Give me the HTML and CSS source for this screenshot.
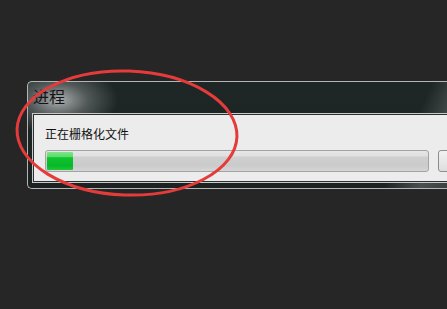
FILE: index.html
```html
<!DOCTYPE html>
<html lang="zh">
<head>
<meta charset="utf-8">
<link rel="stylesheet" href="styles.css">
</head>
<body>
<div class="desktop">
  <div class="window">
    <div class="title">进程</div>
    <div class="client-outer">
      <div class="client">
        <div class="label">正在栅格化文件</div>
        <div class="row">
          <div class="progress"><div class="fill" style="width:26px"></div></div>
          <div class="button"></div>
        </div>
      </div>
    </div>
  </div>
  <svg class="mark" width="447" height="309" viewBox="0 0 447 309">
    <ellipse cx="127" cy="133" rx="110" ry="62" transform="rotate(2 127 133)" fill="none" stroke="#e43b3b" stroke-width="3"/>
  </svg>
</div>
</body>
</html>
```
FILE: styles.css
```css
html, body {
  margin: 0;
  padding: 0;
  background: #262626;
  overflow: hidden;
}
.desktop {
  position: relative;
  width: 447px;
  height: 309px;
  overflow: hidden;
  padding: 81px 0 0 27px;
  box-sizing: border-box;
}
.window {
  width: 470px;
  height: 108px;
  box-sizing: border-box;
  border: 1px solid #b4b6b6;
  border-right: none;
  border-radius: 5px 0 0 5px;
  background:
    radial-gradient(ellipse 60px 34px at 30px 18px, rgba(185,190,190,0.9), rgba(130,136,136,0.5) 50%, rgba(30,36,36,0) 100%),
    linear-gradient(115deg, rgba(0,0,0,0) 0%, rgba(0,0,0,0) 78%, rgba(110,116,116,0.55) 85%, rgba(80,86,86,0.5) 92%, rgba(110,116,116,0.6) 100%),
    linear-gradient(#1f2626, #1c2222);
  display: flex;
  flex-direction: column;
  padding-bottom: 5px;
  font-family: "Noto Sans CJK SC", "Noto Sans", sans-serif;
}
.title {
  height: 31px;
  box-sizing: border-box;
  padding: 4px 0 0 5px;
  font-size: 16px;
  line-height: 20px;
  color: #151515;
}
.client-outer {
  margin-left: 4px;
  border: 1px solid #c9cbcb;
  border-right: none;
}
.client {
  border: 1px solid #2c2f2f;
  border-right: none;
  background: #ececec;
  padding: 12px 0 0 11px;
  box-sizing: border-box;
  height: 68px;
}
.label {
  font-size: 12px;
  line-height: 14px;
  color: #111;
  height: 14px;
}
.row {
  display: flex;
  gap: 9px;
  margin-top: 9px;
}
.progress {
  flex: 0 0 384px;
  height: 22px;
  box-sizing: border-box;
  border: 1px solid #a2a4a4;
  border-radius: 3px;
  background: linear-gradient(#e6e6e6 0%, #e0e0e0 25%, #cfcfcf 30%, #cbcbcb 75%, #d6d6d6 100%);
  overflow: hidden;
  padding: 1px;
}
.fill {
  height: 100%;
  border-radius: 1px;
  background: linear-gradient(#7fe48c 0%, #5cdc6c 25%, #10c530 32%, #06b827 75%, #20c63c 100%);
}
.button {
  flex: 0 0 40px;
  height: 22px;
  box-sizing: border-box;
  border: 1px solid #8c8e8e;
  border-radius: 3px;
  background: linear-gradient(#f2f2f2, #dedede);
}
.mark {
  position: absolute;
  left: 0;
  top: 0;
  pointer-events: none;
}
```
